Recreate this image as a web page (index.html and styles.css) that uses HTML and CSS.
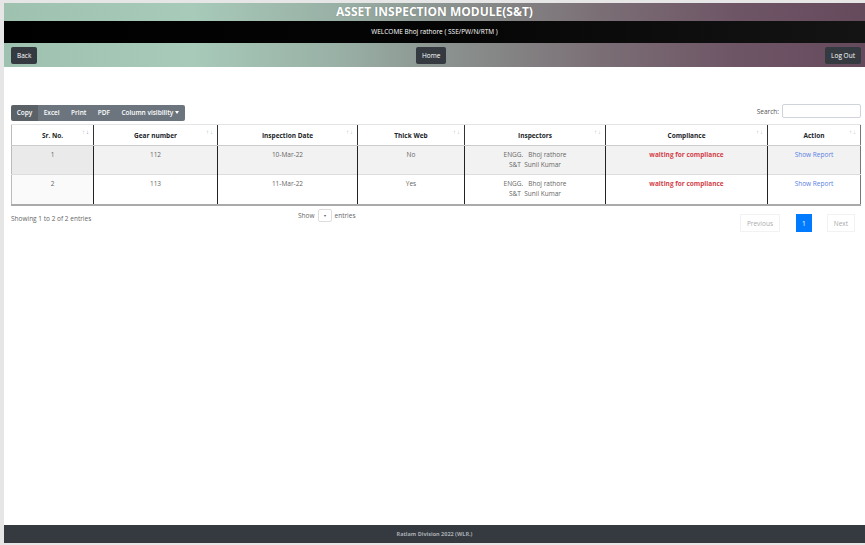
FILE: index.html
```html
<!DOCTYPE html>
<html>
<head>
<meta charset="utf-8">
<link rel="stylesheet" href="styles.css">
</head>
<body>
<div class="page">
  <header class="title-bar">ASSET INSPECTION MODULE(S&amp;T)</header>
  <div class="welcome-bar">WELCOME Bhoj rathore ( SSE/PW/N/RTM )</div>
  <nav class="nav-bar">
    <a class="nav-btn">Back</a>
    <a class="nav-btn">Home</a>
    <a class="nav-btn">Log Out</a>
  </nav>
  <main class="main">
    <div class="toolbar">
      <div class="btn-group">
        <span class="dt-btn active">Copy</span>
        <span class="dt-btn">Excel</span>
        <span class="dt-btn">Print</span>
        <span class="dt-btn">PDF</span>
        <span class="dt-btn">Column visibility <span class="caret"></span></span>
      </div>
      <label class="search">Search: <span class="search-input"></span></label>
    </div>
    <table class="grid">
      <colgroup>
        <col style="width:82px"><col style="width:124px"><col style="width:140px"><col style="width:107px"><col style="width:141px"><col style="width:162px"><col>
      </colgroup>
      <thead>
        <tr>
          <th class="sorted">Sr. No.</th>
          <th>Gear number</th>
          <th>Inspection Date</th>
          <th>Thick Web</th>
          <th>Inspectors</th>
          <th>Compliance</th>
          <th>Action</th>
        </tr>
      </thead>
      <tbody>
        <tr class="odd">
          <td class="sort-col">1</td>
          <td>112</td>
          <td>10-Mar-22</td>
          <td>No</td>
          <td><div>ENGG. &nbsp; Bhoj rathore</div><div>S&amp;T &nbsp;Sunil Kumar</div></td>
          <td class="comp">waiting for compliance</td>
          <td><a class="link">Show Report</a></td>
        </tr>
        <tr class="even">
          <td class="sort-col">2</td>
          <td>113</td>
          <td>11-Mar-22</td>
          <td>Yes</td>
          <td><div>ENGG. &nbsp; Bhoj rathore</div><div>S&amp;T &nbsp;Sunil Kumar</div></td>
          <td class="comp">waiting for compliance</td>
          <td><a class="link">Show Report</a></td>
        </tr>
      </tbody>
    </table>
    <div class="footer-row">
      <div class="info">Showing 1 to 2 of 2 entries</div>
      <div class="length">Show <span class="length-select">&#9662;</span> entries</div>
      <div class="pager">
        <span class="pg disabled">Previous</span>
        <span class="pg current">1</span>
        <span class="pg disabled">Next</span>
      </div>
    </div>
  </main>
  <footer class="footer">Ratlam Division 2022 (WLR.)</footer>
</div>
</body>
</html>
```
FILE: styles.css
```css
html, body {
  margin: 0;
  padding: 0;
}
body {
  background: #e6e6e6;
  font-family: "Open Sans", "Noto Sans", sans-serif;
  padding: 3px 0 2px 4px;
  height: 545px;
  box-sizing: border-box;
  overflow: hidden;
}
.page {
  background: #fff;
  height: 540px;
  display: flex;
  flex-direction: column;
}
.title-bar, .nav-bar {
  background: linear-gradient(to right, #9fc1b0 0%, #a7cab9 22%, #98aea4 40%, #8a918e 52%, #7a6d74 70%, #6e5566 85%, #654a5c 100%);
}
.title-bar {
  height: 18px;
  line-height: 18px;
  text-align: center;
  color: #fff;
  font-weight: 700;
  font-size: 12px;
  text-shadow: 0 0 1px rgba(0,0,0,.3);
}
.welcome-bar {
  height: 22px;
  line-height: 22px;
  background: linear-gradient(to right, #000 0%, #050505 50%, #141414 100%);
  color: #fff;
  text-align: center;
  font-size: 6.5px;
}
.nav-bar {
  height: 24px;
  display: flex;
  align-items: center;
  justify-content: space-between;
  padding: 0 4px 0 7px;
}
.nav-btn {
  background: #343a40;
  color: #fff;
  font-size: 6.5px;
  height: 17px;
  line-height: 17px;
  padding: 0 6px;
  border-radius: 2px;
  margin-top: 1px;
}
.main {
  flex: 1;
  padding: 37px 4px 0 7px;
}
.toolbar {
  display: flex;
  justify-content: space-between;
  align-items: flex-start;
}
.btn-group {
  display: flex;
  margin-top: 1px;
  border-radius: 2px;
  overflow: hidden;
}
.dt-btn {
  background: #6c757d;
  color: #fff;
  font-size: 6.5px;
  font-weight: 600;
  height: 16px;
  line-height: 16px;
  padding: 0 5.7px;
}
.dt-btn.active {
  background: #5a6268;
}
.caret {
  display: inline-block;
  width: 0;
  height: 0;
  border-left: 2.5px solid transparent;
  border-right: 2.5px solid transparent;
  border-top: 3px solid #fff;
  vertical-align: 1px;
}
.search {
  font-size: 6.5px;
  color: #555;
  display: flex;
  align-items: center;
  gap: 3px;
}
.search-input {
  display: inline-block;
  width: 77px;
  height: 12px;
  border: 1px solid #ced4da;
  border-radius: 2px;
}
.grid {
  width: 850px;
  margin-top: 3px;
  border-collapse: collapse;
  table-layout: fixed;
  font-size: 6.5px;
  border-left: 1px solid #bbb;
  border-right: 1px solid #777;
  border-bottom: 2px solid #aaa;
}
.grid th {
  position: relative;
  height: 20px;
  font-weight: 700;
  color: #212529;
  text-align: center;
  border-left: 1px solid #333;
  border-bottom: 1px solid #ccc;
  border-top: 1px solid #e4e4e4;
  padding: 0;
}
.grid th:first-child { border-left: none; }
.grid th::before, .grid th::after {
  position: absolute;
  top: 3px;
  font-size: 6px;
  color: #bbb;
  font-weight: 400;
}
.grid th::before { content: "\2191"; right: 8px; }
.grid th::after { content: "\2193"; right: 4px; }
.grid th.sorted::after { color: #8a8ae6; }
.grid td {
  text-align: center;
  vertical-align: top;
  color: #666;
  padding: 4px 2px 0;
  line-height: 10px;
  border-left: 1px solid #222;
  border-top: 1px solid #ddd;
}
.grid td:first-child { border-left: none; }
.grid tr.odd td { background: #f2f2f2; height: 24px; }
.grid tr.odd td.sort-col { background: #eaeaea; }
.grid tr.even td { background: #fff; height: 25px; }
.grid tr.even td.sort-col { background: #fafafa; }
.grid td.comp {
  color: #d33f49;
  font-weight: 700;
}
.link {
  color: #5b80e4;
}
.footer-row {
  display: grid;
  grid-template-columns: 287px auto 1fr;
  align-items: start;
  font-size: 6.5px;
  color: #666;
  margin-top: 3px;
}
.info { padding-top: 5px; }
.length {
  display: flex;
  align-items: center;
  gap: 3px;
  height: 12px;
}
.length-select {
  display: inline-block;
  width: 12px;
  height: 11px;
  border: 1px solid #ddd;
  border-radius: 2px;
  font-size: 4px;
  line-height: 11px;
  text-align: center;
  color: #555;
}
.pager {
  display: flex;
  justify-content: flex-end;
  padding-right: 6px;
  margin-top: 5px;
}
.pg {
  height: 18px;
  line-height: 18px;
  padding: 0 6px;
  color: #aaa;
  border: 1px solid #f2f2f2;
  box-sizing: border-box;
}
.pg.current {
  background: #007bff;
  color: #fff;
  border-color: #007bff;
  margin: 0 15px 0 16px;
  padding: 0 5px;
}
.footer {
  height: 18px;
  line-height: 18px;
  background: #343a40;
  color: #a9adb2;
  text-align: center;
  font-size: 5.5px;
  font-weight: 700;
}
```
